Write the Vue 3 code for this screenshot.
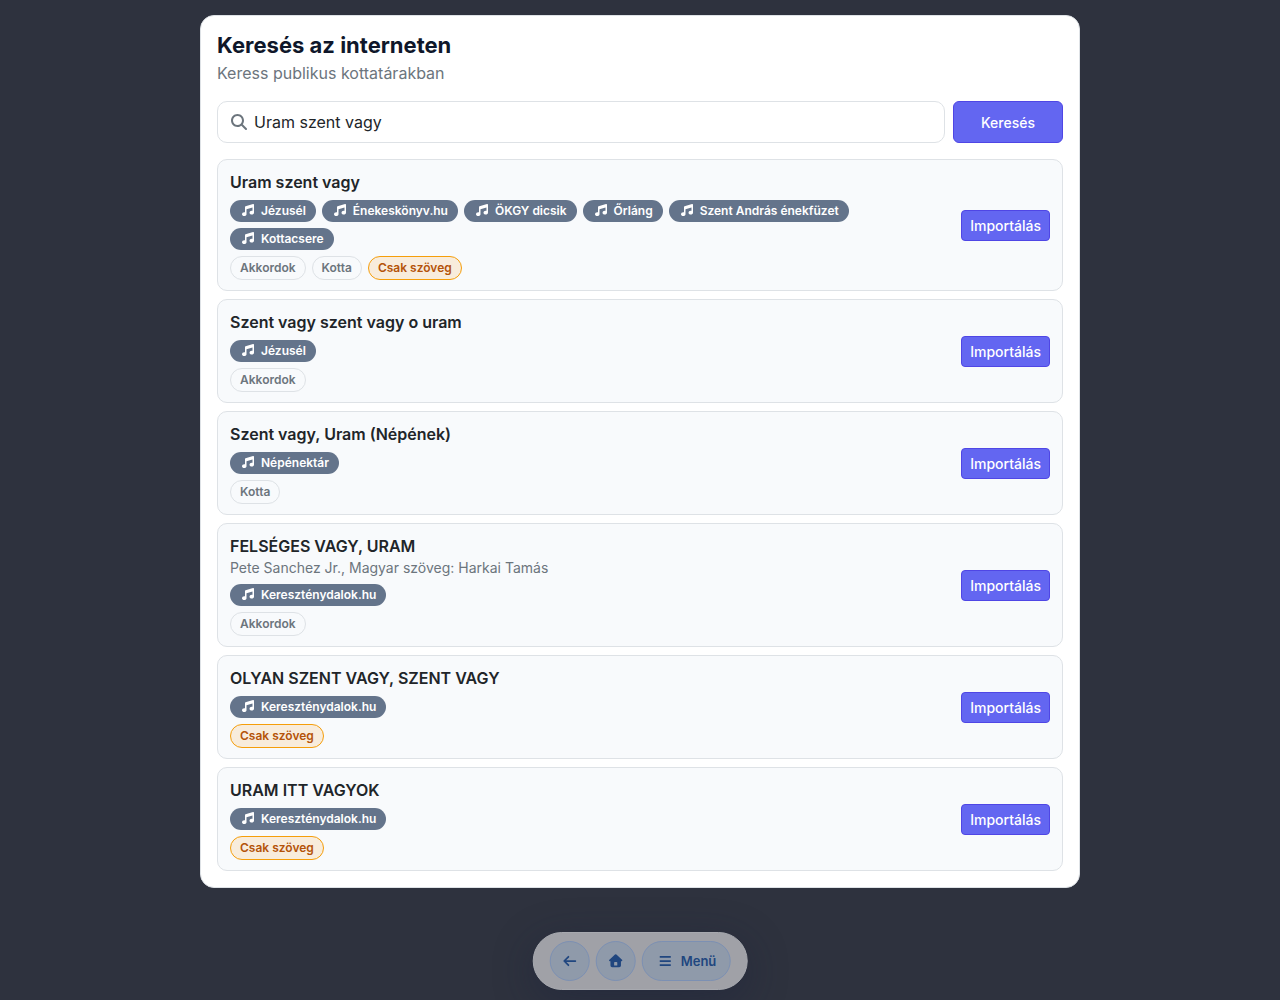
<template>
  <div class="backdrop">
    <main class="panel">
      <header>
        <h1>Keresés az interneten</h1>
        <p class="subtitle">Keress publikus kottatárakban</p>
      </header>

      <form class="search" @submit.prevent>
        <label class="field" for="query">
          <svg viewBox="0 0 512 512" aria-label="Keresés">
            <path d="M416 208c0 45.900-14.900 88.300-40 122.700L502.600 457.400c12.500 12.500 12.500 32.800 0 45.300s-32.800 12.500-45.300 0L330.700 376c-34.400 25.200-76.800 40-122.700 40C93.100 416 0 322.900 0 208S93.100 0 208 0S416 93.100 416 208zM208 352a144 144 0 1 0 0-288 144 144 0 1 0 0 288z" />
          </svg>
          <input id="query" v-model="query" type="text">
        </label>
        <button type="submit" class="btn btn-search">Keresés</button>
      </form>

      <ul class="results">
        <li v-for="song in songs" :key="song.title" class="result">
          <div class="info">
            <h2>{{ song.title }}</h2>
            <p v-if="song.author" class="author">{{ song.author }}</p>
            <div class="chips">
              <span v-for="source in song.sources" :key="source" class="chip source">
                <svg viewBox="0 0 512 512">
                  <path d="M499.100 6.300c8.100 6 12.900 15.600 12.900 25.700v72V368c0 44.200-43 80-96 80s-96-35.800-96-80s43-80 96-80c11.200 0 22 1.600 32 4.600V147L192 223.800V432c0 44.200-43 80-96 80s-96-35.800-96-80s43-80 96-80c11.200 0 22 1.600 32 4.600V200 128c0-14.100 9.300-26.600 22.800-30.700l320-96c9.700-2.900 20.200-1.100 28.300 5z" />
                </svg>
                {{ source }}
              </span>
            </div>
            <div class="chips">
              <span
                v-for="tag in song.tags"
                :key="tag"
                class="chip tag"
                :class="{ warning: tag === 'Csak szöveg' }"
              >{{ tag }}</span>
            </div>
          </div>
          <button type="button" class="btn btn-import">Importálás</button>
        </li>
      </ul>
    </main>

    <nav class="dock">
      <button type="button" class="round" aria-label="Vissza">
        <svg viewBox="0 0 16 16" fill="none" stroke="currentColor" stroke-width="2" stroke-linecap="round" stroke-linejoin="round">
          <path d="M14.500 8H2M6.500 3.200L1.700 8L6.500 12.800" />
        </svg>
      </button>
      <button type="button" class="round" aria-label="Kezdőlap">
        <svg viewBox="0 0 16 16" fill="currentColor">
          <path fill-rule="evenodd" d="M7.200.6a1.200 1.200 0 0 1 1.600 0l6.400 5.900c.8.700.4 1.900-.6 1.900H14v4.800a2 2 0 0 1-2 2H4a2 2 0 0 1-2-2V8.400h-.6c-1 0-1.400-1.200-.6-1.900zM7 9a.8.800 0 0 0-.8.800v3.400h3.600V9.800A.8.800 0 0 0 9 9z" />
        </svg>
      </button>
      <button type="button" class="menu">
        <svg viewBox="0 0 16 16" fill="none" stroke="currentColor" stroke-width="2">
          <path d="M1.200 3.200h12.600M1.200 8h12.600M1.200 12.800h12.600" />
        </svg>
        Menü
      </button>
    </nav>
  </div>
</template>

<script setup>
import { ref } from 'vue'

const query = ref('Uram szent vagy')

const songs = [
  {
    title: 'Uram szent vagy',
    sources: ['Jézusél', 'Énekeskönyv.hu', 'ÖKGY dicsik', 'Őrláng', 'Szent András énekfüzet', 'Kottacsere'],
    tags: ['Akkordok', 'Kotta', 'Csak szöveg'],
  },
  { title: 'Szent vagy szent vagy o uram', sources: ['Jézusél'], tags: ['Akkordok'] },
  { title: 'Szent vagy, Uram (Népének)', sources: ['Népénektár'], tags: ['Kotta'] },
  {
    title: 'FELSÉGES VAGY, URAM',
    author: 'Pete Sanchez Jr., Magyar szöveg: Harkai Tamás',
    sources: ['Kereszténydalok.hu'],
    tags: ['Akkordok'],
  },
  { title: 'OLYAN SZENT VAGY, SZENT VAGY', sources: ['Kereszténydalok.hu'], tags: ['Csak szöveg'] },
  { title: 'URAM ITT VAGYOK', sources: ['Kereszténydalok.hu'], tags: ['Csak szöveg'] },
]
</script>

<style>
body {
  background: #2e323e;
}
</style>

<style scoped>
.backdrop {
  box-sizing: border-box;
  min-height: 100vh;
  padding: 15px 16px 112px;
  color: #212529;
  font-family: Inter, "Noto Sans", sans-serif;
  font-size: 16px;
  line-height: 24px;
}

.backdrop * {
  box-sizing: border-box;
}

h1, h2, p, ul {
  margin: 0;
  padding: 0;
}

button, input {
  font-family: inherit;
}

.panel {
  max-width: 880px;
  margin: 0 auto;
  padding: 16px;
  background: #fff;
  border: 1px solid #dee2e6;
  border-radius: 14px;
}

h1 {
  margin-bottom: 2px;
  color: #0f172a;
  font-size: 22px;
  font-weight: 700;
  line-height: 27px;
}

.subtitle, .author {
  color: #6c757d;
}

.search {
  display: flex;
  gap: 8px;
  margin: 16px 0;
}

.field {
  display: flex;
  flex: 1;
  align-items: center;
  gap: 7px;
  height: 42px;
  padding: 0 13px;
  border: 1px solid #dee2e6;
  border-radius: 10px;
}

.field svg {
  width: 16px;
  height: 16px;
  fill: #6c757d;
}

.field input {
  flex: 1;
  min-width: 0;
  padding: 0;
  border: 0;
  outline: 0;
  background: transparent;
  color: #212529;
  font-size: 16px;
  line-height: 24px;
}

.btn {
  flex: none;
  background: #6366f1;
  border: 1px solid #4f46e5;
  color: #fff;
  font-size: 14px;
  font-weight: 500;
  line-height: 21px;
}

.btn-search {
  width: 110px;
  border-radius: 6px;
}

.btn-import {
  padding: 4px 8px;
  border-radius: 4px;
}

.results {
  display: grid;
  gap: 8px;
  list-style: none;
}

.result {
  display: flex;
  align-items: center;
  justify-content: space-between;
  gap: 12px;
  padding: 10px 12px;
  background: #f8fafc;
  border: 1px solid #dee2e6;
  border-radius: 10px;
}

.info {
  max-width: 640px;
}

h2 {
  font-size: 16px;
  font-weight: 600;
  line-height: 24px;
}

.author {
  font-size: 14px;
  line-height: 20px;
}

.chips {
  display: flex;
  flex-wrap: wrap;
  gap: 6px;
  margin-top: 6px;
}

.chip {
  display: inline-flex;
  align-items: center;
  border-radius: 12px;
  font-size: 12px;
  font-weight: 600;
}

.source {
  gap: 7px;
  height: 22px;
  padding: 0 10px 0 12px;
  background: #64748b;
  color: #fff;
}

.source svg {
  width: 12px;
  height: 12px;
  margin-bottom: 2px;
  fill: currentColor;
}

.tag {
  height: 24px;
  padding: 0 9px 1px;
  border: 1px solid #dee2e6;
  color: #6c757d;
}

.warning {
  background: #f8ecdc;
  border-color: #f59e0b;
  color: #b45309;
}

/* floating navigation, dimmed behind the open panel */
.dock {
  position: fixed;
  bottom: 10px;
  left: 50%;
  display: flex;
  gap: 6px;
  padding: 8px 16px;
  background: #a0a1a7;
  border: 1px solid #a7a9af;
  border-radius: 29px;
  box-shadow: 0 10px 40px rgba(24, 32, 60, .4);
  transform: translateX(-50%);
}

.dock button {
  display: flex;
  align-items: center;
  justify-content: center;
  height: 40px;
  padding: 0;
  background: #8f9aaa;
  border: 1px solid #7c90b3;
  border-radius: 20px;
  color: #20467f;
  font-size: 13px;
  font-weight: 600;
}

.dock svg {
  width: 14px;
  height: 14px;
}

.dock .round {
  width: 40px;
}

.dock .menu {
  gap: 8px;
  padding: 0 13px 0 16px;
}
</style>
